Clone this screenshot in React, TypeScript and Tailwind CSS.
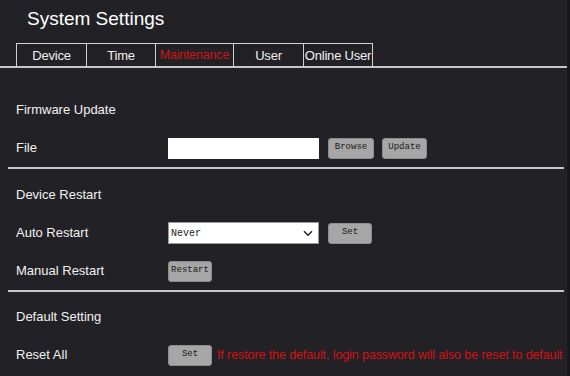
import React from "react";

const tabs = [
  { name: "Device", w: "w-[71px]" },
  { name: "Time", w: "w-[70px]" },
  { name: "Maintenance", w: "w-[79px]", active: true },
  { name: "User", w: "w-[71px]" },
  { name: "Online User", w: "w-[70px]" },
];

function Btn({ children, className = "" }: { children: React.ReactNode; className?: string }) {
  return (
    <div
      className={`flex h-[21px] items-center justify-center rounded-[3px] border border-[#8d8d8d] bg-[#a6a6a6] font-['Liberation_Mono',monospace] text-[9px] text-[#1a1a1a] ${className}`}
    >
      {children}
    </div>
  );
}

function Row({ label, children }: { label: string; children?: React.ReactNode }) {
  return (
    <div className="flex h-[38px] items-center">
      <div className="w-[168px] shrink-0 pl-[16px] text-[13px] text-[#f2f2f2]">{label}</div>
      {children}
    </div>
  );
}

function Sep() {
  return <div className="ml-[8px] mr-[3px] h-[2px] bg-[#c6c6c6]" />;
}

export default function App() {
  return (
    <div className="h-[376px] w-[570px] overflow-hidden border-r-[3px] border-[#18171b] bg-[#222126] font-['Liberation_Sans',Arial,sans-serif]">
      <div className="h-[43px] pl-[27px] pt-[5px] text-[19px] leading-[28px] text-white">System Settings</div>

      <div className="flex h-[25px] border-b-2 border-[#c6c6c6] pl-[16px]">
        {tabs.map((t) => (
          <div
            key={t.name}
            className={`-ml-px flex h-[24px] items-center justify-center whitespace-nowrap border border-b-0 border-[#cfcfcf] first:ml-0 ${t.w} ${
              t.active ? "text-[12.5px] tracking-[-0.2px] text-[#d01515]" : "text-[13px] tracking-[-0.2px] text-[#f0f0f0]"
            }`}
          >
            {t.name}
          </div>
        ))}
      </div>

      <div className="pt-[23px]">
        <Row label="Firmware Update" />
        <Row label="File">
          <div className="h-[21px] w-[151px] bg-white" />
          <Btn className="ml-[9px] w-[46px]">Browse</Btn>
          <Btn className="ml-[8px] w-[45px]">Update</Btn>
        </Row>
        <Sep />

        <div className="pt-[7px]">
          <Row label="Device Restart" />
          <Row label="Auto Restart">
            <div className="flex h-[22px] w-[151px] items-center justify-between border border-[#9a9a9a] bg-white pl-[2px] pr-[5px] font-['Liberation_Mono',monospace] text-[10px] text-[#222]">
              <span>Never</span>
              <svg width="10" height="7" viewBox="0 0 10 7">
                <path d="M1 1.2 L5 5.2 L9 1.2" fill="none" stroke="#222" strokeWidth="1.5" />
              </svg>
            </div>
            <Btn className="ml-[9px] w-[44px]">Set</Btn>
          </Row>
          <Row label="Manual Restart">
            <Btn className="w-[44px]">Restart</Btn>
          </Row>
        </div>
        <Sep />

        <div className="pt-[6px]">
          <Row label="Default Setting" />
          <Row label="Reset All">
            <Btn className="w-[44px]">Set</Btn>
            <span className="ml-[5px] whitespace-nowrap text-[12.5px] tracking-[-0.1px] text-[#d41212]">
              If restore the default, login password will also be reset to default
            </span>
          </Row>
        </div>
      </div>
    </div>
  );
}
